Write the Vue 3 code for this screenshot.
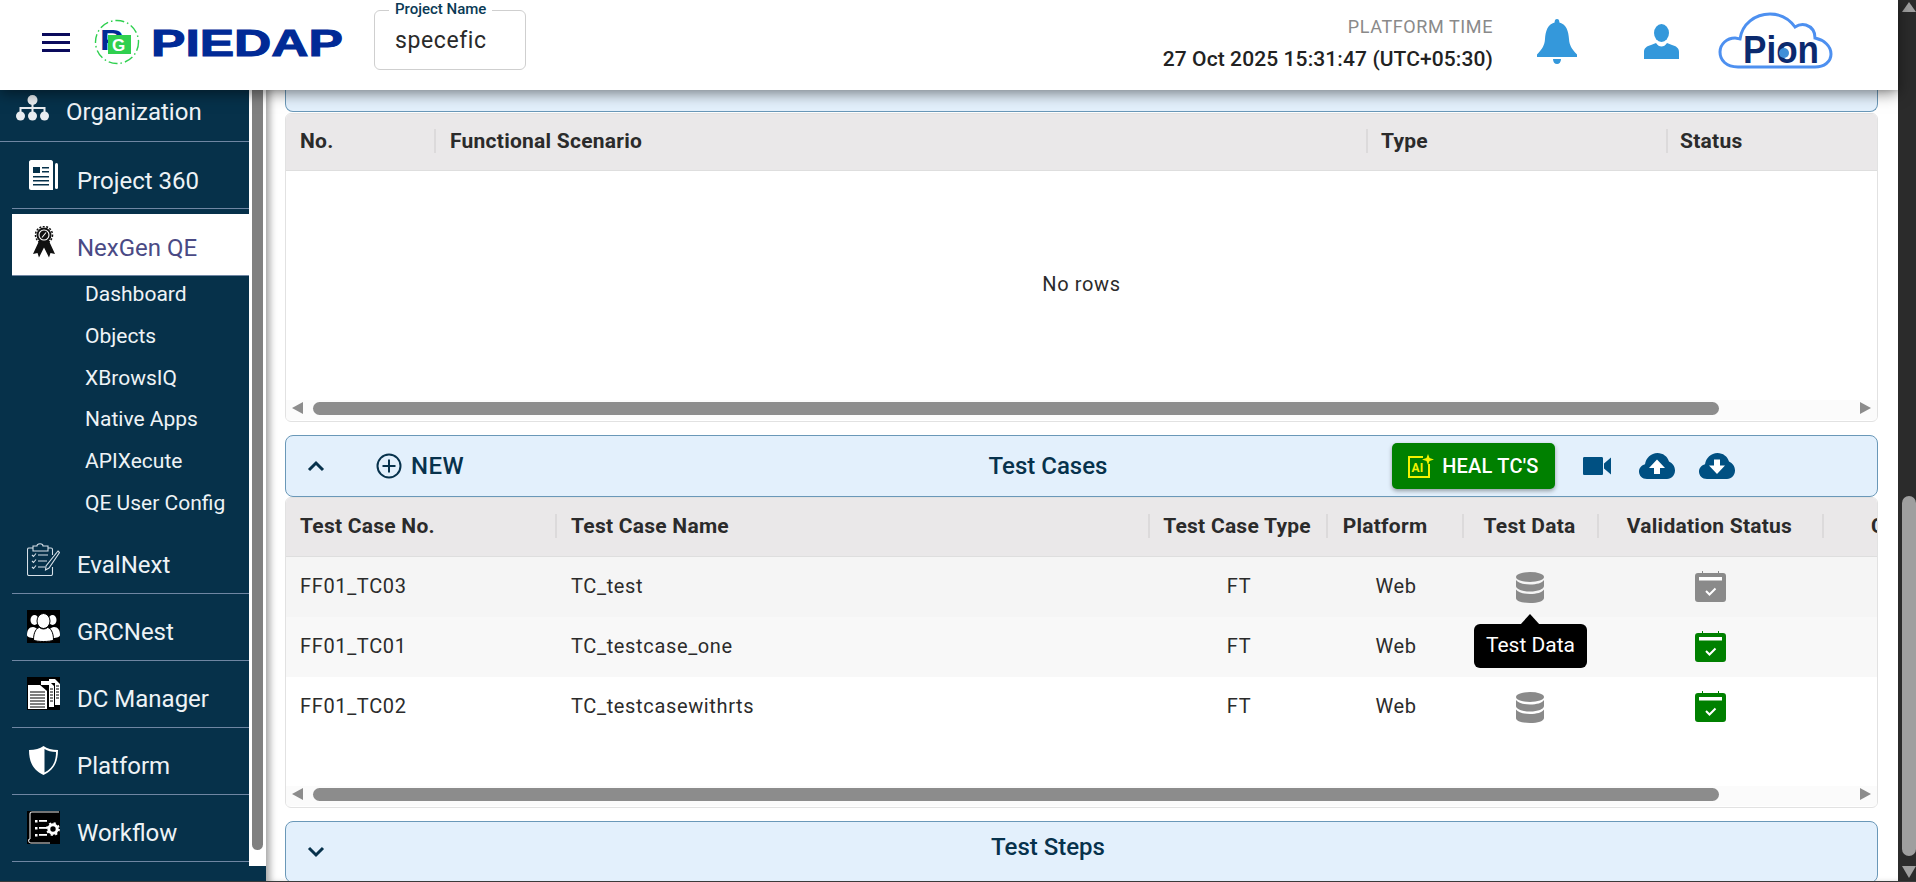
<script setup>
const subItems = ['Dashboard', 'Objects', 'XBrowsIQ', 'Native Apps', 'APIXecute', 'QE User Config']
const testCases = [
  { no: 'FF01_TC03', name: 'TC_test', status: 'grey', tip: true },
  { no: 'FF01_TC01', name: 'TC_testcase_one', status: 'green', tip: false, noData: true },
  { no: 'FF01_TC02', name: 'TC_testcasewithrts', status: 'green', tip: false }
]
</script>

<template>
  <div class="page">
    <div class="window">
      <header class="topbar">
        <div class="burger"><i></i><i></i><i></i></div>
        <svg class="logo" width="250" height="60" viewBox="0 0 250 60">
          <circle cx="23" cy="27" r="21.5" fill="none" stroke="#2fd04f" stroke-width="1.4" stroke-dasharray="9 3 1.5 3" />
          <text x="6" y="35" class="logo-p" font-size="30" textLength="23" lengthAdjust="spacingAndGlyphs">P</text>
          <rect x="14" y="20" width="23" height="19" fill="#2fd04f" />
          <text x="18" y="36" class="logo-g" font-size="17">G</text>
          <text x="57" y="41" class="logo-word" font-size="37" textLength="192" lengthAdjust="spacingAndGlyphs">PIEDAP</text>
        </svg>
        <div class="project">
          <span class="project-label">Project Name</span>
          <span class="project-value">specefic</span>
        </div>
        <div class="time">
          <div class="time-label">PLATFORM TIME</div>
          <div class="time-value">27 Oct 2025 15:31:47 (UTC+05:30)</div>
        </div>
        <svg class="bell" width="40" height="45" viewBox="0 0 40 45">
          <path fill="#3498db" d="M20 0c1.5 0 2.4 1.2 2.4 3.4C29.5 5.5 31.5 12 32 20c.4 6 2.5 10 8 15.5V38H0v-2.500C5.500 30 7.600 26 8 20c.5-8 2.500-14.500 9.600-16.600C17.600 1.200 18.500 0 20 0z" />
          <path fill="#3498db" d="M16 40h8c0 3-1.700 5-4 5s-4-2-4-5z" />
        </svg>
        <svg class="user" width="35" height="35" viewBox="0 0 35 35">
          <ellipse cx="17.500" cy="9" rx="7.500" ry="9" fill="#3498db" />
          <path fill="#3498db" d="M0 35v-7c0-4 3-6 7-7l5-2c1.500 2.500 3.500 3.500 5.500 3.500s4-1 5.500-3.500l5 2c4 1 7 3 7 7v7z" />
        </svg>
        <svg class="pion" width="115" height="57" viewBox="0 0 115 57">
          <path fill="#fff" stroke="#4d90f0" stroke-width="3" d="M20 55C8 55 2 48 2 40c0-8 7-14 15-14 2 0 4 1 5 1C24 12 37 2 52 2c12 0 20 6 25 13 3-2 7-3 11-2 6 2 9 7 9 13 9 2 16 8 16 16 0 8-7 13-16 13z" />
          <text x="25" y="51" class="pion-text" font-size="38" textLength="76" lengthAdjust="spacingAndGlyphs">Pion</text>
          <circle cx="66" cy="41" r="5" fill="#3f8fd8" />
        </svg>
      </header>

      <div class="body">
        <aside class="side">
          <nav class="nav">
            <div class="nav-row org">
              <svg class="nav-icon org-icon" width="33" height="26" viewBox="0 0 33 26">
                <g fill="#e9edf1">
                  <circle cx="16.500" cy="5" r="5" /><circle cx="4.500" cy="21" r="4.500" /><circle cx="16.500" cy="21" r="4.500" /><circle cx="28.500" cy="21" r="4.500" />
                  <rect x="15.500" y="8" width="2" height="10" /><rect x="4" y="12" width="25" height="2" /><rect x="3.500" y="12" width="2" height="6" /><rect x="27.500" y="12" width="2" height="6" />
                </g>
              </svg>
              <span>Organization</span>
            </div>
            <div class="nav-row project-row">
              <svg class="nav-icon" width="29" height="30" viewBox="0 0 29 30">
                <path fill="#fff" d="M2 0h20c1 0 2 1 2 2v28H2c-1 0-2-1-2-2V2C0 1 1 0 2 0z" />
                <rect x="26" y="3" width="3" height="26" rx="1.500" fill="#fff" />
                <g fill="#06314a"><rect x="4" y="7" width="7" height="6" /><rect x="13" y="7" width="7" height="1.500" /><rect x="13" y="11" width="7" height="1.500" /><rect x="4" y="16" width="16" height="1.500" /><rect x="4" y="20" width="16" height="1.500" /><rect x="4" y="24" width="16" height="1.500" /></g>
              </svg>
              <span>Project 360</span>
            </div>
            <div class="nav-row active">
              <svg class="nav-icon award" width="24" height="32" viewBox="0 0 24 32">
                <path fill="#111" d="M7 15 1 28l4.500-1 1.500 4.500 5-10 5 10 1.500-4.500 4.500 1-6-13z" />
                <circle cx="12" cy="9" r="7.500" fill="#111" />
                <circle cx="12" cy="9" r="8.500" fill="none" stroke="#111" stroke-width="1.500" stroke-dasharray="2 1.500" />
                <circle cx="12" cy="9" r="5" fill="none" stroke="#fff" stroke-width="1.100" />
                <path d="M10 11.500l4-5" stroke="#fff" stroke-width="1.100" />
              </svg>
              <span>NexGen QE</span>
            </div>
            <ul class="sub">
              <li v-for="item in subItems" :key="item">{{ item }}</li>
            </ul>
            <div class="nav-row">
              <svg class="nav-icon" width="33" height="33" viewBox="0 0 33 33">
                <g fill="none" stroke="#d6e0e8" stroke-width="1.100">
                  <path d="M21 5h3c1 0 1.500.5 1.500 1.500V12M25.500 24v7c0 1-.5 1.500-1.500 1.500H2c-1 0-1.500-.5-1.500-1.500V6.500C.5 5.500 1 5 2 5h4" />
                  <path d="M6 3h4c0-3 6-3 6 0h5v5H6z" />
                  <path d="M5 12l1.500 1.500L9 10.500M5 18l1.500 1.500L9 16.500M5 24l1.500 1.500L9 22.500M11 12h10M11 18h9M11 24h7" />
                  <path d="M31 8l1.500 1.500L22 25l-3.500 2 .5-4z" />
                </g>
              </svg>
              <span>EvalNext</span>
            </div>
            <div class="nav-row">
              <svg class="nav-icon" width="33" height="33" viewBox="0 0 33 33">
                <rect width="33" height="33" fill="#000" />
                <g fill="#fff">
                  <ellipse cx="7.500" cy="10" rx="4" ry="5" /><ellipse cx="25.500" cy="10" rx="4" ry="5" />
                  <path d="M0 25c0-5 2-8 6-8 2 0 3 1 4 2-2 2-3 5-3 9-4 0-7-1-7-3zM33 25c0-5-2-8-6-8-2 0-3 1-4 2 2 2 3 5 3 9 4 0 7-1 7-3z" />
                </g>
                <ellipse cx="16.500" cy="11" rx="6.500" ry="7.500" fill="#fff" stroke="#000" />
                <path fill="#fff" stroke="#000" d="M6.500 30c0-8 3-12 6-12.500 2.500 2 5.500 2 8 0 3 .5 6 4.500 6 12.500-3 2-17 2-20 0z" />
              </svg>
              <span>GRCNest</span>
            </div>
            <div class="nav-row">
              <svg class="nav-icon" width="33" height="33" viewBox="0 0 33 33">
                <rect width="33" height="33" fill="#000" />
                <path fill="#fff" d="M22 2h6l5 5v21h-5V6h-6z" />
                <path fill="#fff" d="M14 4h8l5 5v21h-5V8h-8z" />
                <path fill="#fff" d="M1 8h12l7 6v18H1z" />
                <g stroke="#000" stroke-width="1.200"><path d="M3 15h15M3 18h15M3 21h15M3 24h15M3 27h15M3 30h15M23 12h3M23 15h3M23 18h3M23 21h3M23 24h3M29 9h3M29 12h3M29 15h3M29 18h3M29 21h3" /></g>
              </svg>
              <span>DC Manager</span>
            </div>
            <div class="nav-row">
              <svg class="nav-icon" width="29" height="29" viewBox="0 0 29 29">
                <path fill="#fff" d="M14.500 0C18 2.500 23 4 29 4c0 12-4 20-14.500 25C4 24 0 16 0 4c6 0 11-1.500 14.500-4z" />
                <path fill="#06314a" d="M15.500 3c3 1.800 7 3 11.500 3 0 10-3.500 16.500-11.500 20.500z" />
              </svg>
              <span>Platform</span>
            </div>
            <div class="nav-row">
              <svg class="nav-icon" width="33" height="33" viewBox="0 0 33 33">
                <rect width="33" height="33" fill="#000" />
                <g fill="none" stroke="#e8e8e8" stroke-width="1.100"><path d="M3 28V3c0-1.500 1-2 2-2h27M3 28c-2 0-2 4 1 4h19" /></g>
                <g fill="#fff"><rect x="8" y="9" width="2.500" height="2.500" /><rect x="12" y="9" width="8" height="1.800" /><rect x="8" y="16" width="2.500" height="2.500" /><rect x="12" y="16" width="8" height="1.800" /><rect x="8" y="23" width="2.500" height="2.500" /><rect x="12" y="23" width="8" height="1.800" /></g>
                <circle cx="26" cy="18" r="4.200" fill="none" stroke="#fff" stroke-width="3" />
                <circle cx="26" cy="18" r="6" fill="none" stroke="#fff" stroke-width="1.800" stroke-dasharray="2.200 2.500" />
              </svg>
              <span>Workflow</span>
            </div>
          </nav>
          <div class="side-track"><div class="side-thumb"></div></div>
        </aside>

        <main class="main">
          <div class="bar stub"></div>

          <section class="table first">
            <div class="thead cols-a">
              <div class="th start"><span>No.</span></div>
              <div class="th start"><span>Functional Scenario</span></div>
              <div class="th start"><span>Type</span></div>
              <div class="th start last"><span>Status</span></div>
            </div>
            <div class="no-rows">No rows</div>
            <div class="hbar">
              <i class="arrow left"></i>
              <div class="hthumb"></div>
              <i class="arrow right"></i>
            </div>
          </section>

          <div class="bar tall">
            <svg class="chev" width="18" height="12" viewBox="0 0 18 12"><path d="M2 10l7-7 7 7" fill="none" stroke="#07324c" stroke-width="3" /></svg>
            <div class="new">
              <svg width="26" height="26" viewBox="0 0 26 26"><circle cx="13" cy="13" r="11.500" fill="none" stroke="#07324c" stroke-width="2" /><path d="M13 6.500v13M6.500 13h13" stroke="#07324c" stroke-width="2" /></svg>
              <span>NEW</span>
            </div>
            <div class="bar-title">Test Cases</div>
            <button class="heal">
              <svg width="26" height="24" viewBox="0 0 26 24">
                <path d="M15 3H1v20h20V10" fill="none" stroke="#f2f200" stroke-width="2" />
                <text x="3.500" y="18" class="heal-ai" font-size="12">AI</text>
                <path d="M20 0l1.500 4L26 5.500l-4.500 1.500L20 11l-1.500-4L14 5.500 18.500 4z" fill="#f2f200" />
              </svg>
              <span>HEAL TC'S</span>
            </button>
            <svg class="tool video" width="28" height="18" viewBox="0 0 28 18"><path fill="#005082" d="M1.500 0h17c1 0 1.500.5 1.500 1.500v15c0 1-.5 1.500-1.500 1.500h-17C.5 18 0 17.500 0 16.500v-15C0 .5.5 0 1.500 0zM21 6.500 28 .5v17l-7-6z" /></svg>
            <svg class="tool up" width="36" height="26" viewBox="0 0 36 26">
              <path fill="#005082" d="M8 26C3 26 0 22.500 0 18.500 0 15 2.500 12 6 11.200 7 5 12 0 18.500 0 24 0 28.500 3.500 30 8.500c3.500 1.500 6 5 6 9 0 4.500-3.500 8.500-8 8.500z" />
              <path fill="#fff" d="M18 6.500l8 8.500h-5v6h-6v-6h-5z" />
            </svg>
            <svg class="tool down" width="36" height="26" viewBox="0 0 36 26">
              <path fill="#005082" d="M8 26C3 26 0 22.500 0 18.500 0 15 2.500 12 6 11.200 7 5 12 0 18.500 0 24 0 28.500 3.500 30 8.500c3.500 1.500 6 5 6 9 0 4.500-3.500 8.500-8 8.500z" />
              <path fill="#fff" d="M15 6.500h6v6h5l-8 8.500-8-8.500h5z" />
            </svg>
          </div>

          <section class="table second">
            <div class="thead cols-b">
              <div class="th start"><span>Test Case No.</span></div>
              <div class="th start"><span>Test Case Name</span></div>
              <div class="th"><span>Test Case Type</span></div>
              <div class="th th-platform"><span>Platform</span></div>
              <div class="th"><span>Test Data</span></div>
              <div class="th"><span>Validation Status</span></div>
              <div class="th start last"><span>Created</span></div>
            </div>
            <div class="rows">
              <div v-for="row in testCases" :key="row.no" class="tr cols-b">
                <div class="td start">{{ row.no }}</div>
                <div class="td start">{{ row.name }}</div>
                <div class="td">FT</div>
                <div class="td">Web</div>
                <div class="td icon-cell">
                  <svg v-if="!row.noData" class="db" width="28" height="31" viewBox="0 0 28 31">
                    <g fill="#8a8a8a">
                      <ellipse cx="14" cy="5" rx="14" ry="5" />
                      <path d="M0 8c2 3 7 4.500 14 4.500S26 11 28 8v6c0 3-6 5.500-14 5.500S0 17 0 14z" />
                      <path d="M0 17.500c2 3 7 4.500 14 4.500s12-1.500 14-4.500V26c0 3-6 5-14 5S0 29 0 26z" />
                    </g>
                  </svg>
                  <div v-if="row.tip" class="tip">Test Data</div>
                </div>
                <div class="td icon-cell">
                  <svg class="cal" width="31" height="31" viewBox="0 0 31 31">
                    <path :fill="row.status === 'green' ? '#008000' : '#8a8a8a'" d="M7 0h1v2h15V0h1v2h4c2 0 3 1 3 3v23c0 2-1 3-3 3H3c-2 0-3-1-3-3V5c0-2 1-3 3-3h4z" />
                    <rect x="4" y="6" width="23" height="3.500" fill="#fff" />
                    <path d="M11 20l3.500 3.500L20.500 17.500" fill="none" stroke="#fff" stroke-width="2" />
                  </svg>
                </div>
                <div class="td"></div>
              </div>
            </div>
            <div class="hbar">
              <i class="arrow left"></i>
              <div class="hthumb"></div>
              <i class="arrow right"></i>
            </div>
          </section>

          <div class="bar last-bar">
            <svg class="chev" width="18" height="12" viewBox="0 0 18 12"><path d="M2 2l7 7 7-7" fill="none" stroke="#07324c" stroke-width="3" /></svg>
            <div class="bar-title steps">Test Steps</div>
          </div>
        </main>
      </div>
    </div>

    <div class="vbar">
      <i class="v-arrow up-a"></i>
      <div class="v-thumb"></div>
      <i class="v-arrow down-a"></i>
    </div>
  </div>
</template>

<style>
html, body { margin: 0; overflow: hidden; background: #fff; }
</style>

<style scoped>
.page {
  display: flex;
  width: 1916px;
  height: 882px;
  box-sizing: border-box;
  border-bottom: 1px solid #3a3a3a;
  overflow: hidden;
  font-family: Roboto, "Liberation Sans", sans-serif;
  color: #2b2b2b;
}
.window { width: 1898px; height: 881px; display: flex; flex-direction: column; position: relative; }

.topbar {
  height: 90px;
  flex: none;
  display: flex;
  align-items: center;
  background: #fff;
  box-shadow: 0 3px 14px rgba(0, 0, 0, .5);
  position: relative;
  z-index: 5;
}
.burger { width: 28px; margin-left: 42px; display: flex; flex-direction: column; gap: 5px; margin-top: -6px; }
.burger i { height: 3px; background: #0a0a5c; display: block; }
.logo { margin-left: 24px; flex: none; }
.logo-p { font-family: "Liberation Sans", sans-serif; font-weight: 700; fill: #012a96; }
.logo-g { font-family: "Liberation Sans", sans-serif; font-weight: 700; fill: #fff; }
.logo-word { font-family: "Liberation Sans", sans-serif; font-weight: 700; fill: #012a96; stroke: #012a96; stroke-width: 1; }
.project {
  margin-left: 30px;
  margin-top: -11px;
  width: 152px;
  height: 60px;
  box-sizing: border-box;
  border: 1px solid #cfcfcf;
  border-radius: 6px;
  position: relative;
  display: flex;
  align-items: center;
  padding-left: 20px;
}
.project-label {
  position: absolute;
  left: 14px;
  top: -11px;
  padding: 0 6px;
  background: #fff;
  font-size: 15px;
  font-weight: 500;
  line-height: 18px;
  color: #0a3a55;
}
.project-value { font-size: 23px; letter-spacing: .6px; color: #2a2a2a; margin-top: 2px; }
.time { margin-left: auto; margin-top: -4px; text-align: right; }
.time-label { font-size: 18px; line-height: 22px; color: #8a8a8a; margin-bottom: 9px; letter-spacing: .6px; }
.time-value { font-size: 21px; font-weight: 500; line-height: 24px; color: #222; letter-spacing: .1px; }
.bell { margin-left: 44px; margin-top: -7px; flex: none; }
.user { margin-left: 67px; margin-top: -7px; flex: none; }
.pion { margin-left: 39px; margin-right: 65px; margin-top: -9px; flex: none; }
.pion-text { font-family: "Liberation Sans", sans-serif; font-weight: 700; fill: #0b2a6e; }

.body { flex: 1; display: flex; min-height: 0; }
.side { width: 266px; flex: none; display: flex; background: #06314a; overflow: hidden; }
.nav { width: 249px; flex: none; color: #eef3f6; font-size: 24px; }
.nav-row {
  height: 67px;
  box-sizing: border-box;
  display: flex;
  align-items: center;
  margin-left: 12px;
  padding-left: 15px;
  border-bottom: 1px solid #6f86a3;
}
.nav-row span { position: relative; top: 5px; }
.nav-row.project-row span { top: 6px; }
.nav-icon { flex: none; margin-right: 17px; }
.nav-row svg[width="29"] { margin-left: 2px; margin-right: 19px; }
.nav-row.org { height: 52px; margin-left: 0; padding-left: 16px; }
.nav-row.org span { top: -4px; }
.org-icon { margin-top: -15px; margin-right: 17px; }
.nav-row.active { height: 62px; margin-top: 5px; background: #fff; color: #4a4a85; border-bottom-color: #6f86a3; }
.nav-row.active span { top: 3px; }
.award { margin-left: 5px; margin-right: 21px; margin-top: -5px; }
.sub { list-style: none; margin: -2px 0 0; padding: 0 0 2px 85px; font-size: 21px; }
.sub li { height: 41.800px; line-height: 41.800px; white-space: nowrap; }
.side-track { width: 17px; height: 776px; background: #fff; flex: none; }
.side-thumb { width: 11px; height: 760px; margin-left: 3px; background: #808080; border-radius: 0 0 6px 6px; }

.main {
  flex: 1;
  min-width: 0;
  box-sizing: border-box;
  padding: 0 20px 0 19px;
  background: #fff;
  box-shadow: inset 7px 0 7px -3px rgba(0, 0, 0, .35);
  display: flex;
  flex-direction: column;
  overflow: hidden;
}
.bar {
  flex: none;
  box-sizing: border-box;
  background: #e3f0fc;
  border: 1px solid #6a98b8;
  border-radius: 8px;
  display: flex;
  align-items: center;
  position: relative;
  color: #07324c;
}
.stub { height: 22px; border-top: 0; border-radius: 0 0 8px 8px; }
.tall { height: 62px; margin-top: 13px; }
.last-bar { height: 62px; margin-top: 13px; }
.chev { margin-left: 21px; flex: none; }
.new { display: flex; align-items: center; gap: 9px; margin-left: 51px; font-size: 24px; font-weight: 500; letter-spacing: .5px; }
.bar-title {
  position: absolute;
  left: 0;
  width: 1524px;
  text-align: center;
  font-size: 24px;
  font-weight: 500;
  color: #07324c;
}
.steps { margin-top: -10px; }
.heal {
  margin-left: 928px;
  width: 163px;
  height: 46px;
  flex: none;
  display: flex;
  align-items: center;
  gap: 8px;
  padding: 0 0 0 16px;
  background: #008000;
  border: 0;
  border-radius: 5px;
  color: #fff;
  font-family: Roboto, sans-serif;
  font-size: 20px;
  font-weight: 500;
  letter-spacing: .2px;
  white-space: nowrap;
  box-shadow: 0 2px 4px rgba(0, 0, 0, .35);
}
.heal-ai { font-family: Roboto, sans-serif; font-weight: 700; fill: #f2f200; }
.tool { flex: none; }
.video { margin-left: 28px; }
.up { margin-left: 28px; }
.down { margin-left: 24px; }

.table {
  flex: none;
  box-sizing: border-box;
  border: 1px solid #e2e2e2;
  border-radius: 6px;
  overflow: hidden;
  display: flex;
  flex-direction: column;
  background: #fff;
}
.first { height: 309px; margin-top: 1px; }
.second { height: 311px; }
.thead {
  height: 59px;
  flex: none;
  background: #eae8e9;
  border-bottom: 1px solid #dedede;
  box-sizing: border-box;
  align-items: center;
}
.first .thead { height: 57px; padding-bottom: 2px; }
.second .thead { padding-bottom: 2px; }
.cols-a { display: grid; grid-template-columns: 150px 932px 300px 209px; }
.cols-b { display: grid; grid-template-columns: 271px 593px 178px 136px 135px 225px 200px; }
.th {
  height: 24px;
  box-sizing: border-box;
  display: flex;
  align-items: center;
  justify-content: center;
  border-right: 2px solid #dcdadb;
  padding-right: 2px;
  font-size: 21px;
  font-weight: 700;
  color: #2b2b2b;
  white-space: nowrap;
  letter-spacing: .25px;
}
.th-platform { padding-right: 20px; }
.th.start { justify-content: flex-start; padding-left: 14px; }
.th.start:first-child { padding-left: 14px; }
.cols-a .th.start:nth-child(3) { padding-left: 13px; }
.th.last { border-right: 0; padding-left: 12px; }
.cols-b .th.last { padding-left: 47px; }
.no-rows { flex: 1; display: flex; align-items: center; justify-content: center; font-size: 20px; letter-spacing: .65px; padding-bottom: 3px; }
.rows { flex: 1; }
.tr { height: 60px; align-items: center; }
.tr:nth-child(1) { background: #f5f5f5; }
.tr:nth-child(2) { background: #f8f8f8; }
.td {
  font-size: 20px;
  letter-spacing: .65px;
  text-align: center;
  color: #2b2b2b;
  white-space: nowrap;
  padding-bottom: 2px;
}
.td.start { text-align: left; padding-left: 14px; }
.icon-cell { display: flex; justify-content: center; position: relative; padding-bottom: 0; }
.db { margin-right: 3px; }
.cal { margin-right: 2px; margin-top: -2px; }
.tip {
  position: absolute;
  left: 10px;
  top: 52px;
  width: 113px;
  height: 44px;
  line-height: 43px;
  text-align: center;
  background: #000;
  border-radius: 6px;
  color: #fff;
  font-size: 21px;
  letter-spacing: 0;
  z-index: 3;
}
.tip::before {
  content: "";
  position: absolute;
  left: 46px;
  top: -10px;
  border-left: 10px solid transparent;
  border-right: 10px solid transparent;
  border-bottom: 11px solid #000;
}
.hbar {
  flex: none;
  height: 18px;
  margin-bottom: 1px;
  padding: 2px 6px 0;
  background: #fbfbfb;
  display: flex;
  align-items: flex-start;
}
.hthumb { width: 1406px; height: 13px; margin-left: 10px; border-radius: 7px; background: #8c8c8c; }
.arrow { display: block; width: 0; height: 0; border-top: 6.500px solid transparent; border-bottom: 6.500px solid transparent; }
.arrow.left { border-right: 11px solid #8c8c8c; }
.arrow.right { margin-left: auto; border-left: 11px solid #8c8c8c; }

.vbar {
  width: 18px;
  flex: none;
  height: 881px;
  background: #2b2b2b;
  display: flex;
  flex-direction: column;
  align-items: flex-end;
}
.v-arrow { display: block; width: 0; height: 0; border-left: 7px solid transparent; border-right: 7px solid transparent; }
.up-a { margin-top: 2px; border-bottom: 10px solid #9f9f9f; }
.v-thumb { width: 14px; height: 360px; margin-top: 484px; background: #9f9f9f; border-radius: 7px; }
.down-a { margin-top: 10px; border-top: 12px solid #9f9f9f; }
</style>
